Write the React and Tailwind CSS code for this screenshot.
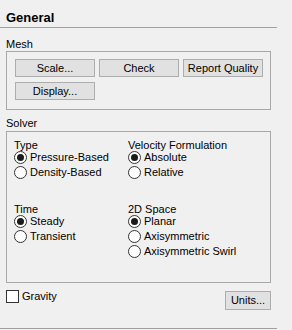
import React, { useState } from 'react';

const Btn = ({ children, className = '' }) => (
  <button
    className={`flex items-center justify-center border border-[#adadad] bg-[#e1e1e1] text-black text-[11px] leading-none ${className}`}
  >
    {children}
  </button>
);

const Radio = ({ label, checked, onClick }) => (
  <div className="flex items-center h-[15px] leading-[15px] cursor-default" onClick={onClick}>
    <span className="w-[13px] h-[13px] rounded-full border border-[#333] bg-white flex items-center justify-center shrink-0">
      {checked && <span className="w-[7px] h-[7px] rounded-full bg-[#1a1a1a]" />}
    </span>
    <span className="ml-[3px] whitespace-nowrap">{label}</span>
  </div>
);

const Group = ({ title, options, value, onChange }) => (
  <div>
    <div className="h-[11px] leading-[13px] whitespace-nowrap">{title}</div>
    {options.map((o) => (
      <Radio key={o} label={o} checked={value === o} onClick={() => onChange(o)} />
    ))}
  </div>
);

export default function App() {
  const [type, setType] = useState('Pressure-Based');
  const [velocity, setVelocity] = useState('Absolute');
  const [time, setTime] = useState('Steady');
  const [space, setSpace] = useState('Planar');
  const [gravity, setGravity] = useState(false);

  return (
    <div className="w-[292px] h-[330px] bg-[#f0f0f0] text-black text-[11px] font-['Liberation_Sans',Arial,sans-serif] overflow-hidden">
      <div className="h-[27px] pl-[6px] pt-[10px] text-[13px] leading-[16px] font-bold">General</div>
      <div className="w-[277px] h-px bg-[#a0a0a0]" />

      {/* Mesh */}
      <div className="pl-[6px] mt-[10px] h-[13px] leading-[13px]">Mesh</div>
      <div className="ml-[6px] w-[265px] h-[59px] border border-[#a8a8a8] pl-[8px] pt-[7px]">
        <div className="flex gap-[4px]">
          <Btn className="w-[80px] h-[18px]">Scale...</Btn>
          <Btn className="w-[80px] h-[18px]">Check</Btn>
          <Btn className="w-[80px] h-[18px]">Report Quality</Btn>
        </div>
        <Btn className="w-[80px] h-[18px] mt-[5px]">Display...</Btn>
      </div>

      {/* Solver */}
      <div className="pl-[6px] mt-[7px] h-[14px] leading-[13px]">Solver</div>
      <div className="ml-[6px] w-[265px] h-[152px] border border-[#a8a8a8] pl-[7px] pt-[7px]">
        <div className="grid grid-cols-[114px_1fr] gap-y-[23px]">
          <Group
            title="Type"
            options={['Pressure-Based', 'Density-Based']}
            value={type}
            onChange={setType}
          />
          <Group
            title="Velocity Formulation"
            options={['Absolute', 'Relative']}
            value={velocity}
            onChange={setVelocity}
          />
          <Group
            title="Time"
            options={['Steady', 'Transient']}
            value={time}
            onChange={setTime}
          />
          <Group
            title="2D Space"
            options={['Planar', 'Axisymmetric', 'Axisymmetric Swirl']}
            value={space}
            onChange={setSpace}
          />
        </div>
      </div>

      <div className="flex items-start mt-[7px] pl-[6px] w-[271px] h-[38px]">
        <div className="flex items-center h-[13px] cursor-default" onClick={() => setGravity(!gravity)}>
          <span className="w-[13px] h-[13px] border border-[#333] bg-white flex items-center justify-center">
            {gravity && <span className="text-[10px] leading-none">✓</span>}
          </span>
          <span className="ml-[3px] leading-[15px]">Gravity</span>
        </div>
        <Btn className="ml-auto w-[46px] h-[19px] mt-[1px]">Units...</Btn>
      </div>
      <div className="w-[277px] h-px bg-[#a0a0a0]" />
    </div>
  );
}
